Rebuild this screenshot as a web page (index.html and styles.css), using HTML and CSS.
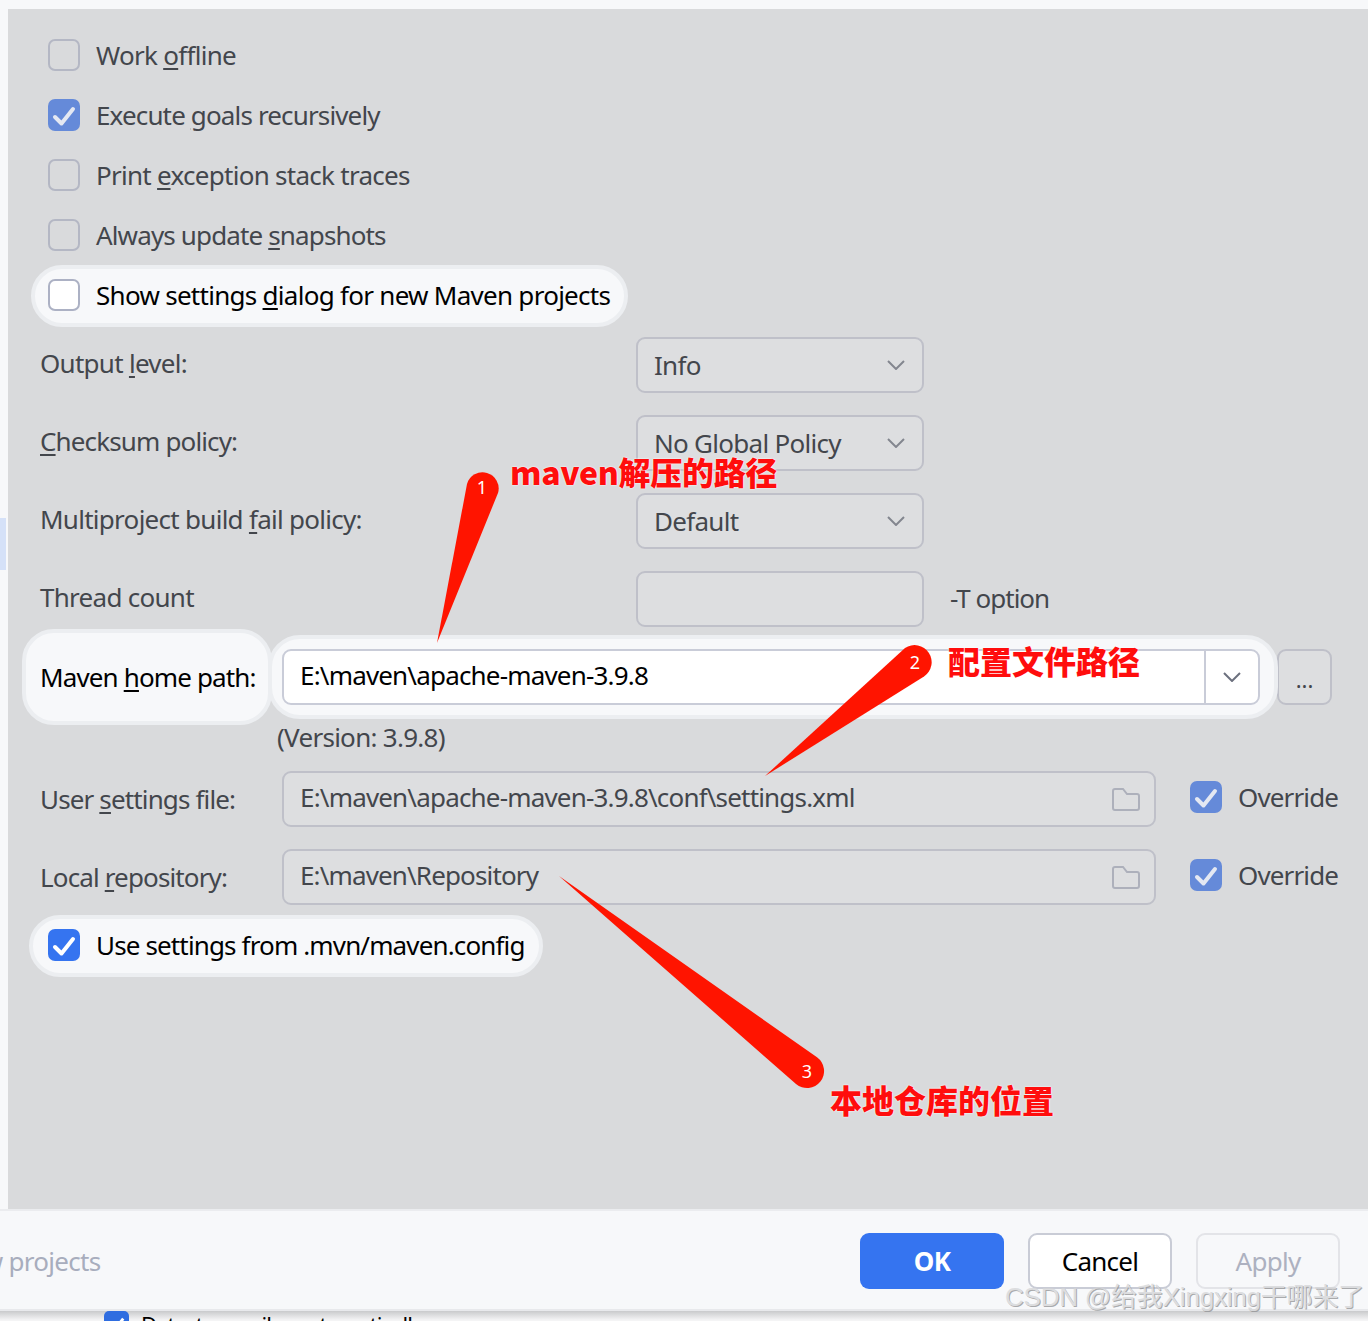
FILE: index.html
```html
<!DOCTYPE html>
<html lang="en">
<head>
<meta charset="utf-8">
<title>Maven settings</title>
<link rel="stylesheet" href="styles.css">
</head>
<body>
<div class="dialog">
  <div class="main">
    <div class="sidebar"><div class="sidebar-mark"></div></div>
    <div class="panel">
      <div class="check-row"><span class="cb"></span><span>Work <u>o</u>ffline</span></div>
      <div class="check-row"><span class="cb cb-on"><svg viewBox="0 0 32 32"><path d="M7 18l6.500 6.500L25 10"/></svg></span><span class="tight">Execute <u>g</u>oals recursively</span></div>
      <div class="check-row"><span class="cb"></span><span>Print <u>e</u>xception stack traces</span></div>
      <div class="check-row"><span class="cb"></span><span class="tight">Always update <u>s</u>napshots</span></div>
      <div class="check-row pill pill-show"><span class="cb cb-white"></span><span>Show settings <u>d</u>ialog for new Maven projects</span></div>

      <div class="options">
        <div class="label">Output <u>l</u>evel:</div>
        <div class="field combo"><span>Info</span><svg class="chev" viewBox="0 0 18 10"><path d="M1 1l8 8 8-8"/></svg></div>
        <div></div>
        <div class="label tight"><u>C</u>hecksum policy:</div>
        <div class="field combo"><span>No Global Policy</span><svg class="chev" viewBox="0 0 18 10"><path d="M1 1l8 8 8-8"/></svg></div>
        <div></div>
        <div class="label">Multiproject build <u>f</u>ail policy:</div>
        <div class="field combo"><span>Default</span><svg class="chev" viewBox="0 0 18 10"><path d="M1 1l8 8 8-8"/></svg></div>
        <div></div>
        <div class="label">Thread count</div>
        <div class="field"></div>
        <div class="hint">-T option</div>
      </div>

      <div class="home-row">
        <div class="home-label"><span class="tight">Maven <u>h</u>ome path:</span></div>
        <div class="home-pill">
          <div class="home-field">
            <span class="home-value field-text">E:\maven\apache-maven-3.9.8</span>
            <span class="home-arrow"><svg class="chev chev-dark" viewBox="0 0 18 10"><path d="M1 1l8 8 8-8"/></svg></span>
          </div>
        </div>
        <div class="browse">...</div>
      </div>
      <div class="version">(Version: 3.9.8)</div>

      <div class="path-row">
        <div class="path-label tight">User <u>s</u>ettings file:</div>
        <div class="field path-field"><span class="field-text">E:\maven\apache-maven-3.9.8\conf\settings.xml</span><svg class="folder" viewBox="0 0 30 26"><path d="M3 5a2 2 0 0 1 2-2h8l4 5h10a2 2 0 0 1 2 2v12a2 2 0 0 1-2 2H5a2 2 0 0 1-2-2z"/></svg></div>
        <div class="override"><span class="cb cb-on"><svg viewBox="0 0 32 32"><path d="M7 18l6.500 6.500L25 10"/></svg></span><span class="tight">Override</span></div>
      </div>
      <div class="path-row">
        <div class="path-label tight">Local <u>r</u>epository:</div>
        <div class="field path-field"><span class="tight">E:\maven\Repository</span><svg class="folder" viewBox="0 0 30 26"><path d="M3 5a2 2 0 0 1 2-2h8l4 5h10a2 2 0 0 1 2 2v12a2 2 0 0 1-2 2H5a2 2 0 0 1-2-2z"/></svg></div>
        <div class="override"><span class="cb cb-on"><svg viewBox="0 0 32 32"><path d="M7 18l6.500 6.500L25 10"/></svg></span><span class="tight">Override</span></div>
      </div>
      <div class="check-row pill pill-use"><span class="cb cb-bright"><svg viewBox="0 0 32 32"><path d="M7 18l6.500 6.500L25 10"/></svg></span><span class="tight">Use settings from .mvn/maven.config</span></div>
    </div>
  </div>

  <div class="footer">
    <div class="footer-note">new projects</div>
    <div class="btn btn-ok">OK</div>
    <div class="btn btn-cancel">Cancel</div>
    <div class="btn btn-apply">Apply</div>
  </div>
  <div class="peek">
    <span class="peek-cb"><svg viewBox="0 0 26 26"><path d="M6 14l5 5 9-11"/></svg></span>
    <span>Detect compiler automatically</span>
  </div>
</div>

<svg class="arrows" viewBox="0 0 1368 1321">
  <path d="M437 643L467 484A16 16 0 1 1 498 493Z"/>
  <path d="M765 776L905 648A17 17 0 1 1 924 676.500Z"/>
  <path d="M559 876L817 1057.300A17 17 0 1 1 796 1084Z"/>
  <text x="482" y="494">1</text>
  <text x="915" y="669">2</text>
  <text x="807" y="1078">3</text>
</svg>
<div class="note note-1">maven解压的路径</div>
<div class="note note-2">配置文件路径</div>
<div class="note note-3">本地仓库的位置</div>
<div class="watermark">CSDN @给我Xingxing干哪来了</div>
</body>
</html>
```
FILE: styles.css
```css
* { box-sizing: border-box; }
html, body { margin: 0; padding: 0; }
body {
  position: relative;
  width: 1368px;
  height: 1321px;
  overflow: hidden;
  background: #f7f8fa;
  font-family: "Noto Sans", "Noto Sans CJK SC", sans-serif;
  font-size: 26px;
  letter-spacing: -0.72px;
  color: #43464c;
}
u { text-underline-offset: 3px; text-decoration-thickness: 2px; }
.tight { letter-spacing: -0.86px; }
.field-text { letter-spacing: -0.82px; }

.dialog { display: flex; flex-direction: column; height: 1321px; }
.main { display: flex; height: 1209px; padding-top: 9px; flex: none; }
.sidebar { width: 8px; flex: none; padding-top: 509px; }
.sidebar-mark { width: 6px; height: 52px; background: #d5e1f8; }
.panel { flex: 1; background: #d9dadc; padding-top: 16px; }

.check-row { display: flex; align-items: center; gap: 16px; height: 60px; padding-left: 40px; }
.cb {
  flex: none;
  width: 32px;
  height: 32px;
  border: 2px solid #b4b7c4;
  border-radius: 7px;
}
.cb svg { display: block; width: 100%; height: 100%; fill: none; stroke: #e4e8f2; stroke-width: 4; stroke-linecap: round; stroke-linejoin: round; }
.cb-on { background: #658ad9; border: 0; }
.cb-white { background: #fff; border-color: #acb1c4; }
.cb-bright { background: #3574f0; border: 0; }
.cb-bright svg { stroke: #fff; }

.pill { background: #f7f8fa; border: 4px solid #eceef1; border-radius: 31px; color: #000; width: max-content; }
.pill-show { height: 62px; margin: 0 0 -2px 23px; padding: 0 14px 2px 13px; }
.pill-use { height: 62px; margin: -12px 0 0 21px; padding: 0 14px 2px 15px; }

.options {
  display: grid;
  grid-template-columns: 596px 288px auto;
  grid-auto-rows: 56px;
  row-gap: 22px;
  padding-left: 32px;
  margin-top: 12px;
  align-items: center;
}
.label { padding-bottom: 4px; }
.field {
  height: 56px;
  background: #dddee0;
  border: 2px solid #bfc0c9;
  border-radius: 9px;
}
.combo { display: flex; align-items: center; justify-content: space-between; padding: 0 17px 0 16px; }
.chev { width: 18px; height: 10px; fill: none; stroke: #83868f; stroke-width: 2; flex: none; }
.chev-dark { stroke: #6c707e; }
.hint { padding: 0 0 2px 26px; letter-spacing: -1px; }

.home-row { display: flex; align-items: center; height: 56px; margin-top: 22px; }
.home-label {
  width: 250px;
  height: 96px;
  margin: -20px 0 -20px 14px;
  padding: 0 0 0 14px;
  display: flex;
  align-items: center;
  background: #f7f8fa;
  border: 4px solid #eceef1;
  border-radius: 32px;
  color: #000;
}
.home-pill {
  position: relative;
  width: 1010px;
  height: 84px;
  margin: -14px 0 -14px -4px;
  padding: 10px 14px 10px 10px;
  background: #f7f8fa;
  border: 4px solid #eceef1;
  border-radius: 32px;
}
.home-field {
  display: flex;
  height: 56px;
  background: #fff;
  border: 2px solid #c9ccd8;
  border-radius: 9px;
  color: #000;
  align-items: stretch;
}
.home-value { flex: 1; padding: 0 0 4px 16px; display: flex; align-items: center; }
.home-arrow { width: 54px; border-left: 2px solid #c9ccd8; display: flex; align-items: center; justify-content: center; }
.browse {
  width: 55px;
  height: 56px;
  margin-left: -1px;
  background: #dddee0;
  border: 2px solid #bfc0c9;
  border-radius: 9px;
  display: flex;
  align-items: center;
  justify-content: center;
  font-size: 22px;
  letter-spacing: 0;
  padding-top: 4px;
}
.version { height: 66px; padding-left: 269px; display: flex; align-items: center; padding-bottom: 2px; }
.path-row { display: flex; align-items: center; height: 56px; margin-bottom: 22px; }
.path-label { width: 274px; padding-left: 32px; }
.path-field { width: 874px; display: flex; align-items: center; justify-content: space-between; padding: 0 14px 4px 16px; }
.folder { width: 30px; height: 26px; fill: none; stroke: #adb0bb; stroke-width: 2; flex: none; margin-top: 4px; }
.override { display: flex; align-items: center; gap: 16px; margin-left: 34px; padding-bottom: 4px; }

.footer {
  height: 102px;
  flex: none;
  display: flex;
  align-items: center;
  gap: 24px;
  padding: 2px 28px 0 0;
  background: #f7f8fa;
  border-top: 2px solid #ebecef;
  border-bottom: 2px solid #e8e9ec;
  overflow: hidden;
}
.footer-note { margin-left: -46px; margin-right: auto; color: #a8adbd; }
.btn {
  width: 144px;
  height: 56px;
  display: flex;
  align-items: center;
  justify-content: center;
  border-radius: 9px;
}
.btn-ok { background: #3574f0; color: #fff; font-weight: 700; }
.btn-cancel { background: #fff; border: 2px solid #c9ccd6; color: #000; }
.btn-apply { border: 2px solid #e3e4e8; color: #adb1c0; }

.peek {
  flex: 1;
  min-height: 0;
  overflow: hidden;
  display: flex;
  gap: 12px;
  padding-left: 104px;
  font-size: 22px;
  letter-spacing: -0.95px;
  line-height: 26px;
  color: #000;
  background: linear-gradient(#c9cacc, #f4f4f5 9px);
}
.peek-cb { flex: none; width: 25px; height: 26px; background: #2f6de0; border-radius: 5px; }
.peek-cb svg { display: block; fill: none; stroke: #fff; stroke-width: 3; }

.arrows { position: absolute; left: 0; top: 0; width: 1368px; height: 1321px; }
.arrows path { fill: #ff1400; }
.arrows text { fill: #fff; font-size: 18px; text-anchor: middle; font-family: "Noto Sans", sans-serif; letter-spacing: 0; }
.note {
  position: absolute;
  font-family: "Noto Sans CJK SC", sans-serif;
  font-weight: 900;
  font-size: 32px;
  line-height: 40px;
  letter-spacing: 0;
  color: #ff0d0d;
  white-space: nowrap;
  text-shadow: 0 0 2px #fff, 0 0 1px #fff;
}
.note-1 { left: 510px; top: 451px; letter-spacing: -0.3px; }
.note-2 { left: 948px; top: 640px; }
.note-3 { left: 830px; top: 1079px; }
.watermark {
  position: absolute;
  right: 4px;
  top: 1279px;
  font-family: "Liberation Sans", "Noto Sans CJK SC", sans-serif;
  font-size: 26px;
  letter-spacing: -0.2px;
  line-height: 36px;
  color: #d4d5d7;
  white-space: nowrap;
  text-shadow: 1px 1px 0 #8f9092;
  opacity: 0.75;
}
```
